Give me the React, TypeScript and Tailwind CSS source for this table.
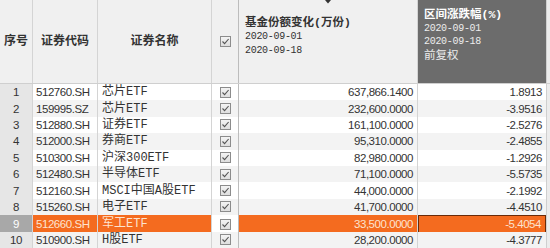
import React from 'react';

const rows = [
  ['1', '512760.SH', '芯片ETF', '637,866.1400', '1.8913'],
  ['2', '159995.SZ', '芯片ETF', '232,600.0000', '-3.9516'],
  ['3', '512880.SH', '证券ETF', '161,100.0000', '-2.5276'],
  ['4', '512000.SH', '券商ETF', '95,310.0000', '-2.4855'],
  ['5', '510300.SH', '沪深300ETF', '82,980.0000', '-1.2926'],
  ['6', '512480.SH', '半导体ETF', '71,100.0000', '-5.5735'],
  ['7', '512160.SH', 'MSCI中国A股ETF', '44,000.0000', '-2.1992'],
  ['8', '515260.SH', '电子ETF', '41,700.0000', '-4.4510'],
  ['9', '512660.SH', '军工ETF', '33,500.0000', '-5.4054'],
  ['10', '510900.SH', 'H股ETF', '28,200.0000', '-4.3777'],
];

const cols = 'grid grid-cols-[33px_65px_114px_27px_179px_128px_1fr]';
const cjk = "font-['Liberation_Mono','Noto_Sans_CJK_SC',monospace]";
const sans = "font-['Liberation_Sans','Noto_Sans_CJK_SC',sans-serif] text-[11.5px] tracking-[-0.45px]";

function Check() {
  return (
    <span className="flex h-[11px] w-[11px] items-center justify-center border border-[#8c8c8c] bg-gradient-to-b from-[#f4f4f4] to-[#dedede]">
      <svg width="9" height="9" viewBox="0 0 9 9">
        <path d="M1.5 4.5 L3.6 6.6 L7.6 2" fill="none" stroke="#555" strokeWidth="1.1" />
      </svg>
    </span>
  );
}

export default function App() {
  return (
    <div className="h-[248px] w-[550px] overflow-hidden bg-white text-[#333]">
      {/* header */}
      <div className={`${cols} h-[84px] border-b border-[#cfcfcf] bg-[#f0f0f0]`}>
        <div className={`flex items-center justify-center border-r border-[#d4d4d4] text-[12px] font-bold ${cjk}`}>序号</div>
        <div className={`flex items-center justify-center border-r border-[#d4d4d4] text-[12px] font-bold ${cjk}`}>证券代码</div>
        <div className={`flex items-center justify-center border-r border-[#d4d4d4] text-[12px] font-bold ${cjk}`}>证券名称</div>
        <div className="flex items-center justify-center border-r border-[#bcbcbc]">
          <Check />
        </div>
        <div className={`relative flex flex-col justify-start border-r border-[#d4d4d4] pl-[6px] pt-[16px] text-[11.5px] leading-[14px] ${cjk}`}>
          <svg className="absolute left-[86px] top-0" width="6" height="4" viewBox="0 0 6 4">
            <path d="M0 0 H6 L3 3.5 Z" fill="#333" />
          </svg>
          <span className="font-bold">基金份额变化(万份)</span>
          <span className="text-[10px] tracking-[-0.3px]">2020-09-01</span>
          <span className="text-[10px] tracking-[-0.3px]">2020-09-18</span>
        </div>
        <div className={`flex flex-col bg-[#6c6c6c] pl-[6px] pt-[8px] text-[11.5px] leading-[13.5px] text-[#ececec] ${cjk}`}>
          <span className="font-bold text-white">区间涨跌幅(%)</span>
          <span className="text-[10px] tracking-[-0.3px]">2020-09-01</span>
          <span className="text-[10px] tracking-[-0.3px]">2020-09-18</span>
          <span>前复权</span>
        </div>
        <div className="border-l border-[#cfcfcf] bg-[#ececec]" />
      </div>

      {/* rows */}
      {rows.map((r, i) => {
        const hi = i === 8;
        const even = i % 2 === 1;
        const bg = hi ? 'bg-[#f46b1f] text-[#fde3cf]' : even ? 'bg-[#f3f3f3]' : 'bg-white';
        return (
          <div key={r[0]} className={`${cols} h-[16.4px] leading-[16px]`}>
            <div className={`flex items-center justify-center border-r border-[#d4d4d4] ${sans} ${hi ? 'bg-[#a8a8a8] text-white' : 'bg-[#e6e6e6]'}`}>{r[0]}</div>
            <div className={`flex items-center whitespace-nowrap border-r border-[#d4d4d4] pl-[3px] ${sans} ${bg}`}>{r[1]}</div>
            <div className={`flex items-center border-r border-[#d4d4d4] pl-[4px] text-[12px] ${cjk} ${bg}`}>{r[2]}</div>
            <div className={`flex items-center justify-center border-r border-[#bcbcbc] ${even ? 'bg-[#f3f3f3]' : 'bg-white'}`}>
              <Check />
            </div>
            <div className={`flex items-center justify-end border-r border-[#d4d4d4] pr-[4px] ${sans} ${bg}`}>{r[3]}</div>
            <div className={`flex items-center justify-end pr-[4px] ${sans} ${bg} ${hi ? 'border border-[#6a2a08]' : ''}`}>{r[4]}</div>
            <div className="border-l border-[#cfcfcf] bg-[#ececec]" />
          </div>
        );
      })}
    </div>
  );
}
